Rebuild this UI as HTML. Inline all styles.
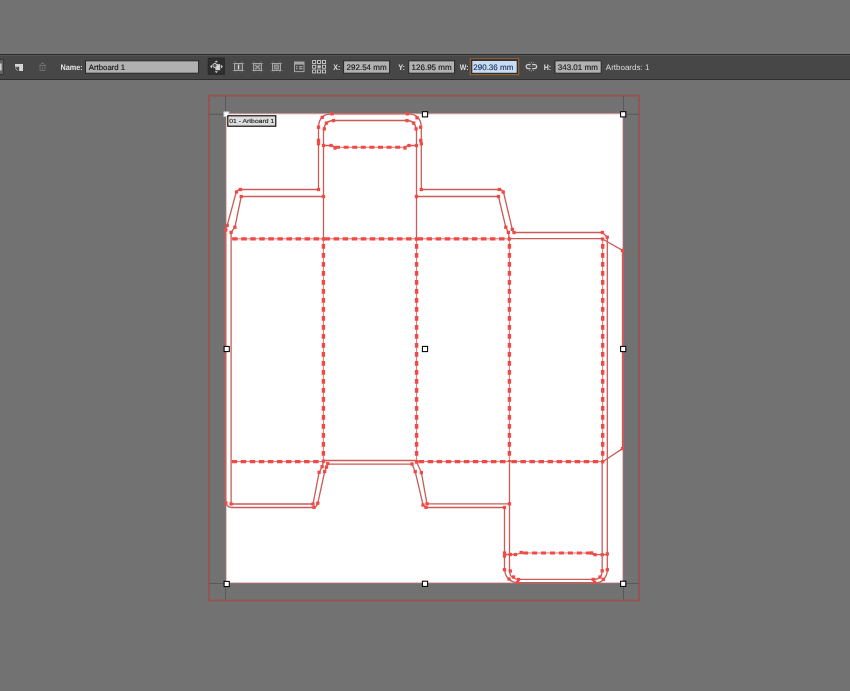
<!DOCTYPE html>
<html><head><meta charset="utf-8">
<style>
html,body{margin:0;padding:0;}
body{width:850px;height:691px;background:#727272;overflow:hidden;}
svg{position:absolute;left:0;top:0;will-change:transform;}
</style></head><body>
<svg width="850" height="691" viewBox="0 0 850 691">
<g id="toolbar">
<rect x="0" y="54" width="850" height="26" fill="#474747"/>
<rect x="0" y="54" width="850" height="1" fill="#2c2c2c"/>
<rect x="0" y="55" width="850" height="1" fill="#535353"/>
<rect x="0" y="79" width="850" height="1" fill="#2e2e2e"/>
<rect x="-6" y="59.5" width="9.5" height="15" fill="#626262" stroke="#383838" stroke-width="1"/>
<rect x="0" y="63.5" width="1.6" height="7" fill="#cfcfcf"/>
<rect x="15" y="64" width="8" height="7" fill="#d6d6d6"/>
<path d="M15,67.2 H18.6 V71" fill="none" stroke="#474747" stroke-width="1.1"/>
<rect x="15" y="68" width="3" height="3" fill="#474747"/>
<path d="M15.3,68.3 L17.6,70.7" stroke="#bdbdbd" stroke-width="0.9"/>
<path d="M39,65.5 H46 M40,65.5 V70.5 H45 V65.5 M41,63.5 H44 M42.5,67 V69.5" fill="none" stroke="#6c6c6c" stroke-width="1"/>
<path d="M40.5,65 L42.5,62.6 L44.5,65" fill="none" stroke="#6c6c6c" stroke-width="0.9"/>
<rect x="208" y="58" width="16.6" height="16.6" fill="#2e2e2e" stroke="#262626" stroke-width="0.6"/>
<rect x="215.4" y="64.2" width="4.8" height="6" fill="#d2d2d2"/>
<circle cx="214.9" cy="65.5" r="2.1" fill="#575757" stroke="#cfcfcf" stroke-width="1"/>
<path d="M214.6,62.2 L216.3,60.4 L218,62.2Z M214.6,71.2 L216.3,73 L218,71.2Z M211.9,64.8 L210.1,66.6 L211.9,68.4Z M221.1,64.8 L222.9,66.6 L221.1,68.4Z" fill="#d8d8d8"/>
<path d="M232.5,63.5 H244.5 M232.5,70.5 H244.5 M235.0,61.5 V72.5 M242.0,61.5 V72.5" stroke="#7a7a7a" stroke-width="0.8" fill="none"/>
<rect x="234.5" y="63.5" width="8" height="7" fill="#5a5a5a" stroke="#a6a6a6" stroke-width="1"/>
<rect x="237.9" y="64.6" width="1.3" height="4.8" fill="#d6d6d6"/>
<path d="M251.5,63.5 H263.5 M251.5,70.5 H263.5 M254.0,61.5 V72.5 M261.0,61.5 V72.5" stroke="#7a7a7a" stroke-width="0.8" fill="none"/>
<rect x="253.5" y="63.5" width="8" height="7" fill="#5a5a5a" stroke="#a6a6a6" stroke-width="1"/>
<path d="M255,64.8 L260,69.2 M260,64.8 L255,69.2" stroke="#9a9a9a" stroke-width="1.4"/>
<path d="M270.5,63.5 H282.5 M270.5,70.5 H282.5 M273.0,61.5 V72.5 M280.0,61.5 V72.5" stroke="#7a7a7a" stroke-width="0.8" fill="none"/>
<rect x="272.5" y="63.5" width="8" height="7" fill="#5a5a5a" stroke="#a6a6a6" stroke-width="1"/>
<rect x="274.7" y="65" width="3.6" height="4" fill="#7a7a7a" stroke="#a8a8a8" stroke-width="0.8"/>
<rect x="294.5" y="62" width="9.5" height="9.6" fill="none" stroke="#a6a6a6" stroke-width="1"/>
<rect x="294.5" y="62" width="9.5" height="2.6" fill="#a6a6a6"/>
<path d="M296,66.8 H297.5 M299,66.8 H302.5 M296,68.8 H297.5 M299,68.8 H302.5" stroke="#b8b8b8" stroke-width="1"/>
<rect x="312.60" y="60.60" width="3.1" height="2.9" fill="#383838" stroke="#d0d0d0" stroke-width="0.9"/>
<rect x="312.60" y="65.30" width="3.1" height="2.9" fill="#383838" stroke="#d0d0d0" stroke-width="0.9"/>
<rect x="312.60" y="70.00" width="3.1" height="2.9" fill="#383838" stroke="#d0d0d0" stroke-width="0.9"/>
<rect x="317.55" y="60.60" width="3.1" height="2.9" fill="#383838" stroke="#d0d0d0" stroke-width="0.9"/>
<rect x="317.45" y="65.20" width="3.4" height="3.2" fill="#bcbcbc"/>
<rect x="317.55" y="70.00" width="3.1" height="2.9" fill="#383838" stroke="#d0d0d0" stroke-width="0.9"/>
<rect x="322.50" y="60.60" width="3.1" height="2.9" fill="#383838" stroke="#d0d0d0" stroke-width="0.9"/>
<rect x="322.50" y="65.30" width="3.1" height="2.9" fill="#383838" stroke="#d0d0d0" stroke-width="0.9"/>
<rect x="322.50" y="70.00" width="3.1" height="2.9" fill="#383838" stroke="#d0d0d0" stroke-width="0.9"/>
<path d="M530.6,64.6 H528.2 Q526.2,64.6 526.2,66.6 Q526.2,68.6 528.2,68.6 H530.6 M532.2,64.6 H534.6 Q536.6,64.6 536.6,66.6 Q536.6,68.6 534.6,68.6 H532.2" fill="none" stroke="#d0d0d0" stroke-width="1.2"/>
<path d="M528.6,66.6 H534.2" stroke="#6a6a6a" stroke-width="0.8"/>
<path d="M529,62.2 L529.8,63.4 M531.4,61.8 V63.2 M533.8,62.2 L533,63.4 M529,71 L529.8,69.8 M531.4,71.4 V70 M533.8,71 L533,69.8" stroke="#a0a0a0" stroke-width="0.8"/>
<rect x="85.5" y="60.8" width="113.1" height="12.4" fill="#b1b1b1" stroke="#262626" stroke-width="1"/>
<rect x="343.6" y="60.8" width="46.0" height="12.4" fill="#b1b1b1" stroke="#262626" stroke-width="1"/>
<rect x="408.7" y="60.8" width="45.900000000000034" height="12.4" fill="#b1b1b1" stroke="#262626" stroke-width="1"/>
<rect x="470.3" y="58.8" width="48.4" height="15.9" fill="#2a2a2a" stroke="#a66a34" stroke-width="1"/>
<rect x="471.8" y="60.4" width="45.4" height="12.9" fill="#c9dcf3" stroke="#262626" stroke-width="1"/>
<rect x="555" y="60.8" width="46.200000000000045" height="12.4" fill="#b1b1b1" stroke="#262626" stroke-width="1"/>
</g>
<g font-family="Liberation Sans, sans-serif" text-rendering="geometricPrecision">
<text x="60.4" y="70" font-size="8.1" fill="#e4e4e4" font-weight="bold" textLength="22.2" lengthAdjust="spacingAndGlyphs">Name:</text>
<text x="88.8" y="69.6" font-size="7.8" fill="#141414" stroke="#141414" stroke-width="0.14">Artboard 1</text>
<text x="333.3" y="70" font-size="8" fill="#dedede" font-weight="bold" textLength="7.0" lengthAdjust="spacingAndGlyphs">X:</text>
<text x="346.6" y="69.5" font-size="8" fill="#181818" stroke="#181818" stroke-width="0.14">292.54 mm</text>
<text x="398.2" y="70" font-size="8" fill="#dedede" font-weight="bold" textLength="6.8" lengthAdjust="spacingAndGlyphs">Y:</text>
<text x="411.6" y="69.5" font-size="8" fill="#181818" stroke="#181818" stroke-width="0.14">126.95 mm</text>
<text x="459.8" y="70" font-size="8" fill="#dedede" font-weight="bold" textLength="8.8" lengthAdjust="spacingAndGlyphs">W:</text>
<text x="473.3" y="69.5" font-size="8" fill="#16305a" stroke="#16305a" stroke-width="0.14">290.36 mm</text>
<text x="543.7" y="70" font-size="8" fill="#dedede" font-weight="bold" textLength="7.4" lengthAdjust="spacingAndGlyphs">H:</text>
<text x="557.8" y="69.5" font-size="8" fill="#181818" stroke="#181818" stroke-width="0.14">343.01 mm</text>
<text x="605.8" y="69.8" font-size="8" fill="#dcdcdc">Artboards: 1</text>
</g>
<g id="art">
<rect x="208.9" y="95.7" width="430" height="504.9" fill="none" stroke="#975252" stroke-width="1.8"/>
<rect x="226" y="113.7" width="397" height="469.3" fill="#ffffff"/>
<rect x="226.2" y="113.9" width="396.6" height="468.9" fill="none" stroke="#e89090" stroke-width="0.7"/>
<path d="M225.1,232 V500" stroke="#b86060" stroke-width="1.2" fill="none"/>
<path d="M623.3,251 V448" stroke="#c05c5c" stroke-width="1.4" fill="none"/>
<path d="M225.5,96 V111.5" stroke="#3c3c3c" stroke-width="0.9" fill="none" opacity="0.5"/>
<path d="M209.5,114.3 H223.5" stroke="#3c3c3c" stroke-width="0.9" fill="none" opacity="0.5"/>
<path d="M623.5,96 V111.5" stroke="#3c3c3c" stroke-width="0.9" fill="none" opacity="0.5"/>
<path d="M626.5,114.3 H638.5" stroke="#3c3c3c" stroke-width="0.9" fill="none" opacity="0.5"/>
<path d="M225.5,587 V599.5" stroke="#3c3c3c" stroke-width="0.9" fill="none" opacity="0.5"/>
<path d="M209.5,583.5 H223.5" stroke="#3c3c3c" stroke-width="0.9" fill="none" opacity="0.5"/>
<path d="M623.5,587 V599.5" stroke="#3c3c3c" stroke-width="0.9" fill="none" opacity="0.5"/>
<path d="M626.5,583.5 H638.5" stroke="#3c3c3c" stroke-width="0.9" fill="none" opacity="0.5"/>
<path d="M318.5,189.5 V128 Q318.5,113.8 332,113.8 H407.5 Q421.3,113.8 421.3,128 V189.5" fill="none" stroke="#c95c58" stroke-width="1.3" opacity="1"/>
<path d="M323.5,239 V133 Q323.5,120.5 334,120.5 H406.5 Q416.5,120.5 416.5,133 V239" fill="none" stroke="#c95c58" stroke-width="1.3" opacity="1"/>
<path d="M323.5,145.5 H331 Q333,145.5 335,147.3" fill="none" stroke="#c95c58" stroke-width="1.3" opacity="1"/>
<path d="M405,147.3 Q407,145.5 409,145.5 H416.5" fill="none" stroke="#c95c58" stroke-width="1.3" opacity="1"/>
<path d="M335,147.3 H405" fill="none" stroke="#e07272" stroke-width="1"/>
<path d="M335,147.3 H405" fill="none" stroke="#f04a46" stroke-width="3.0" stroke-dasharray="5 3.6" stroke-dashoffset="0"/>
<path d="M318.5,189.5 H240.5 Q237,189.5 236,193 L227.2,225.5 Q225.6,228 225.6,231.5 V500 Q225.6,507.5 232,507.5 H314 Q316.5,507 317.8,503.2 L324.7,471.5 L326.5,467.1 L327.8,463.8 Q328.5,464.1 330,464.1 H412" fill="none" stroke="#c95c58" stroke-width="1.3" opacity="1"/>
<path d="M323.5,196.5 H241.2 L234.9,227.2 L231.1,232.4 V504 H313 L319.1,472.4 L322.1,466.7 L323.5,461.5" fill="none" stroke="#c95c58" stroke-width="1.3" opacity="1"/>
<path d="M323.5,460.5 H416.5" fill="none" stroke="#c95c58" stroke-width="1.3" opacity="1"/>
<path d="M412,464.1 L415.2,471.6 L423,504.5 Q424,507.5 427,507.5 H504.5 V569.7 Q505.5,577 509,579 Q512,582.5 518,582.7 H594.6 Q602,582.5 603.3,579.4 Q607.3,576 607.3,569.7 V237.2 L602.4,232.5 H515 Q513,232.5 512.3,229.4 L503.7,193 Q502.5,189.5 499.3,189.5 H421.3" fill="none" stroke="#c95c58" stroke-width="1.3" opacity="1"/>
<path d="M416.6,462 L421.4,472.6 L427,503.8 H509.5" fill="none" stroke="#c95c58" stroke-width="1.3" opacity="1"/>
<path d="M416.5,196.5 H498.5 L505.8,227.2 L508.4,232.4 L509.3,239" fill="none" stroke="#c95c58" stroke-width="1.3" opacity="1"/>
<path d="M509.3,238.6 H602.5" fill="none" stroke="#c95c58" stroke-width="1.3" opacity="1"/>
<path d="M231.1,238.8 H323.5" fill="none" stroke="#e07272" stroke-width="1"/>
<path d="M231.1,238.8 H323.5" fill="none" stroke="#f04a46" stroke-width="3.2" stroke-dasharray="5.5 3.55" stroke-dashoffset="8"/>
<path d="M323.5,238.8 H416.5" fill="none" stroke="#e07272" stroke-width="1"/>
<path d="M323.5,238.8 H416.5" fill="none" stroke="#f04a46" stroke-width="3.2" stroke-dasharray="5.5 3.55" stroke-dashoffset="8"/>
<path d="M416.5,238.8 H509.3" fill="none" stroke="#e07272" stroke-width="1"/>
<path d="M416.5,238.8 H509.3" fill="none" stroke="#f04a46" stroke-width="3.2" stroke-dasharray="5.5 3.55" stroke-dashoffset="8"/>
<path d="M231.1,461.6 H323.5" fill="none" stroke="#e07272" stroke-width="1"/>
<path d="M231.1,461.6 H323.5" fill="none" stroke="#f04a46" stroke-width="3.2" stroke-dasharray="5.5 3.55" stroke-dashoffset="8.5"/>
<path d="M416.5,461.6 H509.3" fill="none" stroke="#e07272" stroke-width="1"/>
<path d="M416.5,461.6 H509.3" fill="none" stroke="#f04a46" stroke-width="3.2" stroke-dasharray="5.5 3.55" stroke-dashoffset="7"/>
<path d="M509.3,461.6 H602.6" fill="none" stroke="#e07272" stroke-width="1"/>
<path d="M509.3,461.6 H602.6" fill="none" stroke="#f04a46" stroke-width="3.2" stroke-dasharray="5.5 3.55" stroke-dashoffset="7"/>
<path d="M323.4,239 V461.8" fill="none" stroke="#e07272" stroke-width="1"/>
<path d="M323.4,239 V461.8" fill="none" stroke="#f04a46" stroke-width="3.4" stroke-dasharray="4.8 4.2" stroke-dashoffset="4"/>
<path d="M416.6,239 V461.8" fill="none" stroke="#e07272" stroke-width="1"/>
<path d="M416.6,239 V461.8" fill="none" stroke="#f04a46" stroke-width="3.4" stroke-dasharray="4.8 4.2" stroke-dashoffset="4"/>
<path d="M509.4,239 V461.8" fill="none" stroke="#e07272" stroke-width="1"/>
<path d="M509.4,239 V461.8" fill="none" stroke="#f04a46" stroke-width="3.4" stroke-dasharray="4.8 4.2" stroke-dashoffset="4"/>
<path d="M602.7,239 V461.8" fill="none" stroke="#e07272" stroke-width="1"/>
<path d="M602.7,239 V461.8" fill="none" stroke="#f04a46" stroke-width="3.4" stroke-dasharray="4.8 4.2" stroke-dashoffset="4"/>
<path d="M509.5,461.8 V571 Q510,577 513.2,577.3 Q515,579.4 519,579.4 H593.2 Q598,579.4 600,577 Q602.2,575 602.2,570.8 V461.8" fill="none" stroke="#c95c58" stroke-width="1.3" opacity="1"/>
<path d="M602.5,239 L622.5,250.5 V448.6 L602.6,461.8" fill="none" stroke="#c95c58" stroke-width="1.3" opacity="1"/>
<path d="M504.5,554.5 H515.4 Q518,554.5 521.2,552.5" fill="none" stroke="#c95c58" stroke-width="1.3" opacity="1"/>
<path d="M591.7,553 Q593,554.7 595,554.7 H607.3" fill="none" stroke="#c95c58" stroke-width="1.3" opacity="1"/>
<path d="M521.2,553 H591.7" fill="none" stroke="#e07272" stroke-width="1"/>
<path d="M521.2,553 H591.7" fill="none" stroke="#f04a46" stroke-width="3.0" stroke-dasharray="5 3.95" stroke-dashoffset="7"/>
<rect x="330.35" y="112.15" width="3.3" height="3.3" fill="#f04a46"/>
<rect x="405.85" y="112.15" width="3.3" height="3.3" fill="#f04a46"/>
<rect x="320.55" y="115.75" width="3.3" height="3.3" fill="#f04a46"/>
<rect x="316.85" y="125.55" width="3.3" height="3.3" fill="#f04a46"/>
<rect x="316.85" y="138.75" width="3.3" height="3.3" fill="#f04a46"/>
<rect x="316.85" y="142.05" width="3.3" height="3.3" fill="#f04a46"/>
<rect x="415.35" y="116.15" width="3.3" height="3.3" fill="#f04a46"/>
<rect x="418.95" y="125.55" width="3.3" height="3.3" fill="#f04a46"/>
<rect x="419.15" y="138.75" width="3.3" height="3.3" fill="#f04a46"/>
<rect x="419.65" y="142.05" width="3.3" height="3.3" fill="#f04a46"/>
<rect x="331.85" y="118.95" width="3.3" height="3.3" fill="#f04a46"/>
<rect x="324.75" y="121.45" width="3.3" height="3.3" fill="#f04a46"/>
<rect x="322.65" y="127.25" width="3.3" height="3.3" fill="#f04a46"/>
<rect x="321.85" y="143.85" width="3.3" height="3.3" fill="#f04a46"/>
<rect x="405.35" y="118.95" width="3.3" height="3.3" fill="#f04a46"/>
<rect x="412.05" y="121.45" width="3.3" height="3.3" fill="#f04a46"/>
<rect x="414.45" y="127.25" width="3.3" height="3.3" fill="#f04a46"/>
<rect x="414.85" y="143.85" width="3.3" height="3.3" fill="#f04a46"/>
<rect x="329.35" y="143.85" width="3.3" height="3.3" fill="#f04a46"/>
<rect x="333.35" y="146.35" width="3.3" height="3.3" fill="#f04a46"/>
<rect x="403.35" y="146.35" width="3.3" height="3.3" fill="#f04a46"/>
<rect x="407.35" y="143.85" width="3.3" height="3.3" fill="#f04a46"/>
<rect x="316.85" y="187.85" width="3.3" height="3.3" fill="#f04a46"/>
<rect x="238.85" y="187.85" width="3.3" height="3.3" fill="#f04a46"/>
<rect x="234.85" y="190.35" width="3.3" height="3.3" fill="#f04a46"/>
<rect x="225.55" y="223.85" width="3.3" height="3.3" fill="#f04a46"/>
<rect x="224.15" y="228.35" width="3.3" height="3.3" fill="#f04a46"/>
<rect x="239.55" y="194.85" width="3.3" height="3.3" fill="#f04a46"/>
<rect x="233.25" y="225.55" width="3.3" height="3.3" fill="#f04a46"/>
<rect x="229.45" y="230.75" width="3.3" height="3.3" fill="#f04a46"/>
<rect x="321.85" y="194.85" width="3.3" height="3.3" fill="#f04a46"/>
<rect x="419.65" y="187.85" width="3.3" height="3.3" fill="#f04a46"/>
<rect x="497.65" y="187.85" width="3.3" height="3.3" fill="#f04a46"/>
<rect x="501.55" y="190.35" width="3.3" height="3.3" fill="#f04a46"/>
<rect x="510.65" y="227.75" width="3.3" height="3.3" fill="#f04a46"/>
<rect x="512.35" y="230.85" width="3.3" height="3.3" fill="#f04a46"/>
<rect x="600.75" y="230.85" width="3.3" height="3.3" fill="#f04a46"/>
<rect x="605.55" y="235.55" width="3.3" height="3.3" fill="#f04a46"/>
<rect x="414.85" y="194.85" width="3.3" height="3.3" fill="#f04a46"/>
<rect x="496.85" y="194.85" width="3.3" height="3.3" fill="#f04a46"/>
<rect x="504.15" y="225.55" width="3.3" height="3.3" fill="#f04a46"/>
<rect x="506.75" y="230.75" width="3.3" height="3.3" fill="#f04a46"/>
<rect x="507.65" y="237.35" width="3.3" height="3.3" fill="#f04a46"/>
<rect x="600.85" y="237.35" width="3.3" height="3.3" fill="#f04a46"/>
<rect x="321.85" y="237.35" width="3.3" height="3.3" fill="#f04a46"/>
<rect x="414.85" y="237.35" width="3.3" height="3.3" fill="#f04a46"/>
<rect x="620.85" y="248.85" width="3.3" height="3.3" fill="#f04a46"/>
<rect x="620.85" y="446.95" width="3.3" height="3.3" fill="#f04a46"/>
<rect x="600.95" y="460.15" width="3.3" height="3.3" fill="#f04a46"/>
<rect x="224.15" y="501.35" width="3.3" height="3.3" fill="#f04a46"/>
<rect x="229.45" y="502.35" width="3.3" height="3.3" fill="#f04a46"/>
<rect x="311.35" y="502.35" width="3.3" height="3.3" fill="#f04a46"/>
<rect x="312.35" y="505.65" width="3.3" height="3.3" fill="#f04a46"/>
<rect x="316.15" y="501.55" width="3.3" height="3.3" fill="#f04a46"/>
<rect x="317.45" y="470.75" width="3.3" height="3.3" fill="#f04a46"/>
<rect x="320.45" y="465.05" width="3.3" height="3.3" fill="#f04a46"/>
<rect x="323.05" y="469.85" width="3.3" height="3.3" fill="#f04a46"/>
<rect x="324.85" y="465.45" width="3.3" height="3.3" fill="#f04a46"/>
<rect x="326.15" y="461.85" width="3.3" height="3.3" fill="#f04a46"/>
<rect x="321.85" y="459.55" width="3.3" height="3.3" fill="#f04a46"/>
<rect x="410.35" y="462.35" width="3.3" height="3.3" fill="#f04a46"/>
<rect x="413.55" y="469.95" width="3.3" height="3.3" fill="#f04a46"/>
<rect x="414.95" y="460.35" width="3.3" height="3.3" fill="#f04a46"/>
<rect x="419.75" y="470.95" width="3.3" height="3.3" fill="#f04a46"/>
<rect x="421.35" y="503.35" width="3.3" height="3.3" fill="#f04a46"/>
<rect x="424.35" y="505.65" width="3.3" height="3.3" fill="#f04a46"/>
<rect x="425.35" y="502.15" width="3.3" height="3.3" fill="#f04a46"/>
<rect x="507.85" y="502.15" width="3.3" height="3.3" fill="#f04a46"/>
<rect x="502.85" y="505.85" width="3.3" height="3.3" fill="#f04a46"/>
<rect x="502.85" y="551.35" width="3.3" height="3.3" fill="#f04a46"/>
<rect x="502.85" y="554.35" width="3.3" height="3.3" fill="#f04a46"/>
<rect x="508.65" y="552.85" width="3.3" height="3.3" fill="#f04a46"/>
<rect x="513.75" y="552.85" width="3.3" height="3.3" fill="#f04a46"/>
<rect x="519.55" y="550.85" width="3.3" height="3.3" fill="#f04a46"/>
<rect x="590.05" y="551.35" width="3.3" height="3.3" fill="#f04a46"/>
<rect x="593.35" y="553.05" width="3.3" height="3.3" fill="#f04a46"/>
<rect x="600.55" y="553.05" width="3.3" height="3.3" fill="#f04a46"/>
<rect x="605.65" y="552.35" width="3.3" height="3.3" fill="#f04a46"/>
<rect x="502.85" y="568.05" width="3.3" height="3.3" fill="#f04a46"/>
<rect x="508.65" y="569.35" width="3.3" height="3.3" fill="#f04a46"/>
<rect x="507.35" y="577.35" width="3.3" height="3.3" fill="#f04a46"/>
<rect x="511.85" y="575.35" width="3.3" height="3.3" fill="#f04a46"/>
<rect x="516.85" y="577.85" width="3.3" height="3.3" fill="#f04a46"/>
<rect x="515.85" y="580.85" width="3.3" height="3.3" fill="#f04a46"/>
<rect x="600.55" y="569.15" width="3.3" height="3.3" fill="#f04a46"/>
<rect x="605.65" y="568.05" width="3.3" height="3.3" fill="#f04a46"/>
<rect x="601.65" y="577.75" width="3.3" height="3.3" fill="#f04a46"/>
<rect x="598.35" y="575.35" width="3.3" height="3.3" fill="#f04a46"/>
<rect x="591.55" y="577.75" width="3.3" height="3.3" fill="#f04a46"/>
<rect x="592.95" y="580.65" width="3.3" height="3.3" fill="#f04a46"/>
<rect x="422.40" y="111.70" width="5.2" height="5.2" fill="#ffffff" stroke="#000000" stroke-width="1.05"/>
<rect x="620.60" y="111.70" width="5.2" height="5.2" fill="#ffffff" stroke="#000000" stroke-width="1.05"/>
<rect x="224.10" y="346.40" width="5.2" height="5.2" fill="#ffffff" stroke="#000000" stroke-width="1.05"/>
<rect x="620.60" y="346.40" width="5.2" height="5.2" fill="#ffffff" stroke="#000000" stroke-width="1.05"/>
<rect x="224.10" y="581.40" width="5.2" height="5.2" fill="#ffffff" stroke="#000000" stroke-width="1.05"/>
<rect x="422.40" y="581.20" width="5.2" height="5.2" fill="#ffffff" stroke="#000000" stroke-width="1.05"/>
<rect x="620.60" y="581.20" width="5.2" height="5.2" fill="#ffffff" stroke="#000000" stroke-width="1.05"/>
<rect x="422.40" y="346.40" width="5.2" height="5.2" fill="#ffffff" stroke="#000000" stroke-width="1.05"/>
<rect x="223.9" y="111.9" width="5" height="4.6" fill="#ffffff" stroke="#c8c8c8" stroke-width="0.9"/>
<rect x="227.8" y="115.8" width="48" height="10.4" fill="#dedede" stroke="#000000" stroke-width="1.1"/>
</g>
<g font-family="Liberation Sans, sans-serif" text-rendering="geometricPrecision">
<text x="229.2" y="123.2" font-size="5.9" fill="#202020" stroke="#202020" stroke-width="0.12" textLength="45" lengthAdjust="spacingAndGlyphs">01 - Artboard 1</text>
</g>
</svg>
</body></html>
